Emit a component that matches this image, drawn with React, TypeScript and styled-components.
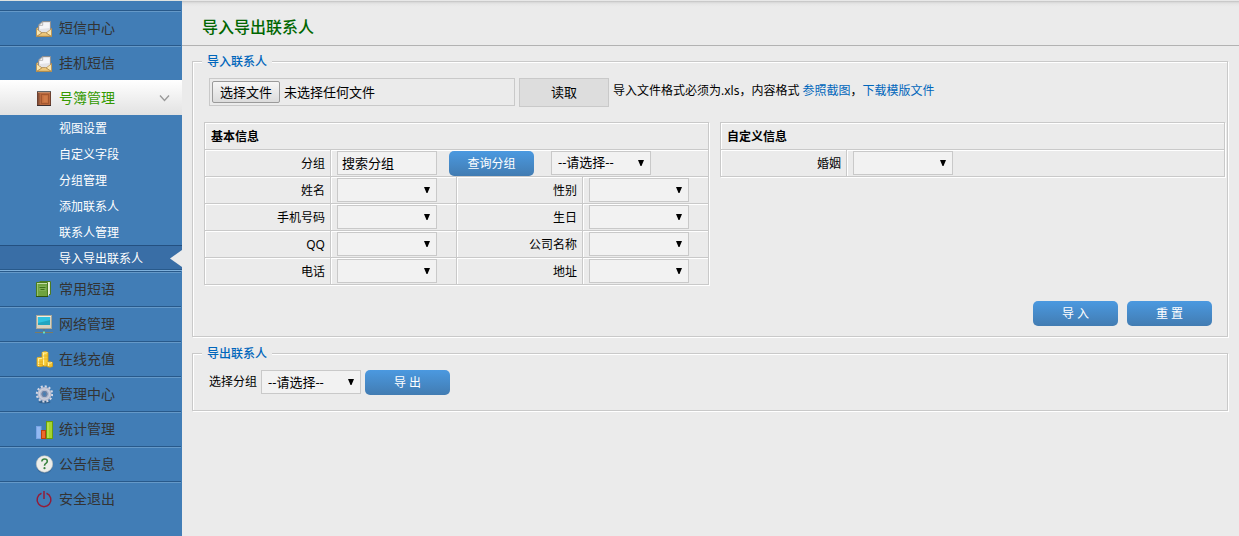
import React from "react";
import styled, { createGlobalStyle, css } from "styled-components";

const GlobalStyle = createGlobalStyle`
  *, *::before, *::after { box-sizing: border-box; }
  body {
    margin: 0;
    background: #ebebeb;
    color: #000;
    font-family: "Noto Sans", "Noto Sans CJK SC", sans-serif;
    font-size: 12px;
    line-height: 17px;
  }
  button, input, select { font: inherit; color: inherit; }
`;

const Page = styled.div`
  display: grid;
  grid-template-columns: 182px minmax(0, 1fr);
  min-height: 100vh;
`;

/* ---------- sidebar ---------- */

const Sidebar = styled.nav`
  background: #417db6;
  border-top: 1px solid #dfe3e0;
  padding-top: 9px;
`;

const List = styled.ul`
  list-style: none;
  margin: 0;
  padding: 0;
`;

const MenuLink = styled.a<{ $active?: boolean }>`
  display: flex;
  align-items: center;
  gap: 6px;
  height: 35px;
  padding: 0 12px 0 35px;
  font-size: 14px;
  line-height: 20px;
  text-decoration: none;
  ${(p) =>
    p.$active
      ? css`
          color: #339900;
          background: linear-gradient(#fff, #e2e2e2);
        `
      : css`
          color: #333;
          margin-right: 1px;
          border-top: 1px solid #28598a;
          box-shadow: inset 0 1px 0 #6599c8;
        `}
`;

const MenuText = styled.span`
  flex: 1;
`;

const SubLink = styled.a<{ $active?: boolean }>`
  display: flex;
  align-items: center;
  justify-content: space-between;
  height: 26px;
  padding-left: 59px;
  color: #fff;
  text-decoration: none;
  ${(p) =>
    p.$active &&
    css`
      background: #396ea6;
      border-top: 1px solid #245080;
      border-bottom: 1px solid #7db0dc;
      box-shadow: inset 0 -1px 0 #28598a;
    `}
`;

const IconSvg = styled.svg`
  display: block;
  flex: none;
`;

/* ---------- content ---------- */

const Main = styled.main`
  border-top: 1px solid #e8e8e8;
  background: linear-gradient(#bdbdbd, #d6d6d6 1px, #e6e6e6 3px, #ebebeb 6px);
`;

const Title = styled.h1`
  margin: 0;
  padding: 0 20px;
  height: 45px;
  line-height: 52px;
  border-bottom: 1px solid #b2b2b2;
  font-size: 16px;
  font-weight: 500;
  color: #006600;
`;

const Group = styled.fieldset<{ $bottom: number }>`
  min-width: 0;
  margin: 7px 11px 8px 10px;
  padding: 8px 2px ${(p) => p.$bottom}px 9px;
  border: 1px solid #c9c9c9;
  box-shadow: 1px 1px 0 #fff, inset 1px 1px 0 #fff;
`;

const Legend = styled.legend`
  padding: 0 5px;
  height: 17px;
  background: #ebebeb;
  color: #0066bb;
  font-weight: 500;
`;

const FormRow = styled.div`
  display: flex;
  align-items: flex-start;
  gap: 4px;
  padding-left: 7px;
`;

const RowText = styled.span`
  line-height: 24px;
`;

const Note = styled.span`
  line-height: 26px;
`;

const FileField = styled.label`
  position: relative;
  display: flex;
  align-items: center;
  gap: 4px;
  width: 306px;
  height: 28px;
  padding: 0 2px;
  border: 1px solid #c9c9c9;
  font-size: 13px;
`;

const FileInput = styled.input`
  position: absolute;
  inset: 0;
  width: 100%;
  height: 100%;
  margin: 0;
  opacity: 0;
`;

const FileTrigger = styled.span`
  width: 68px;
  height: 22px;
  line-height: 20px;
  text-align: center;
  border: 1px solid #9a9a9a;
  border-radius: 2px;
  background: linear-gradient(#f6f6f6, #dcdcdc);
`;

const PlainButton = styled.button`
  width: 90px;
  height: 29px;
  padding: 0;
  border: 1px solid #c9c9c9;
  background: #ddd;
  font-size: 13px;
`;

const BlueButton = styled.button`
  flex: none;
  width: 85px;
  height: 25px;
  padding: 0;
  border: 0;
  border-radius: 5px;
  background: linear-gradient(#4b99e0, #427cb2);
  color: #fff;
`;

const Link = styled.a`
  color: #0066bb;
  text-decoration: none;
`;

const Tables = styled.div`
  display: grid;
  grid-template-columns: repeat(2, minmax(0, 1fr));
  align-items: start;
  gap: 11px;
  margin: 15px 0 16px;
  padding-left: 2px;
`;

const Table = styled.table`
  width: 100%;
  table-layout: fixed;
  border-spacing: 0;
  border: solid #c9c9c9;
  border-width: 1px 0 0 1px;
  box-shadow: 1px 1px 0 #fff;
`;

const cell = css`
  height: 27px;
  padding: 0 6px;
  border: solid #c9c9c9;
  border-width: 0 1px 1px 0;
  box-shadow: inset 1px 1px 0 #fff;
  text-align: left;
`;

const Heading = styled.th`
  ${cell}
`;

const LabelCell = styled.th`
  ${cell}
  padding-right: 5px;
  font-weight: normal;
  text-align: right;
`;

const Cell = styled.td`
  ${cell}
`;

const SearchLine = styled.div`
  display: flex;
  align-items: flex-start;
  height: 25px;
`;

const SearchInput = styled.input`
  width: 100px;
  height: 24px;
  margin-right: 12px;
  padding: 0 4px;
  border: 1px solid #c9c9c9;
  background: #f2f2f2;
  font-size: 13px;
`;

const SearchButton = styled(BlueButton)`
  margin-right: 17px;
`;

const SelectBox = styled.span`
  position: relative;
  display: block;
  flex: none;
  width: 100px;
  height: 24px;
`;

const NativeSelect = styled.select`
  appearance: none;
  display: block;
  width: 100%;
  height: 100%;
  padding: 0 16px 0 6px;
  border: 1px solid #c9c9c9;
  border-radius: 0;
  background: #f2f2f2;
  font-size: 13px;
`;

const Arrow = styled.svg`
  position: absolute;
  right: 7px;
  top: 9px;
  pointer-events: none;
`;

const Actions = styled.div`
  display: flex;
  justify-content: flex-end;
  gap: 9px;
  padding-right: 13px;
`;

/* ---------- icons ---------- */

const Icon = ({ children }: { children: React.ReactNode }) => (
  <IconSvg width="18" height="20" viewBox="0 0 18 20" aria-hidden="true">
    {children}
  </IconSvg>
);

const MailIcon = () => (
  <Icon>
    <path d="M1.5 10.500 3.500 9h11l2 1.500v8h-15z" fill="#f3d791" stroke="#a9854a" />
    <path d="M3.500 13V7l4-3.500h8V13l-6 3z" fill="#e3e3e6" stroke="#909090" />
    <path d="M5 7.500 8 5h6.500v5L5 11z" fill="#f6f6f8" />
    <path d="M4 7.300h3.700V4z" fill="#fff" stroke="#9a9a9a" strokeWidth=".7" />
    <path d="M1.500 10.800 7 15l-5.500 3.500zM16.500 10.800 11 15l5.500 3.500z" fill="#fae6b0" stroke="#b48d4b" strokeWidth=".7" />
    <path d="M2 18.300 7.500 14.500h3l5.500 3.800z" fill="#ecc577" stroke="#a9854a" strokeWidth=".7" />
  </Icon>
);

const BookIcon = () => (
  <Icon>
    <rect x="2.500" y="3.500" width="13" height="14" fill="#b8693f" stroke="#6d4130" />
    <path d="M3 4h1.500v13H3z" fill="#86513a" />
    <path d="M2 3.500h14" stroke="#5f6469" />
    <path d="M3 4.500h12" stroke="#c08a68" />
    <rect x="6.500" y="6.500" width="7" height="9" fill="#c5703f" stroke="#a3572f" />
    <rect x="8.500" y="8" width="4" height="6" fill="#cf7b48" />
    <path d="M2 17.500h14" stroke="#3d2f2e" />
  </Icon>
);

const NotesIcon = () => (
  <Icon>
    <path d="M4.500 2.500h11v13h-2" fill="#dcebc9" stroke="#4c7a22" />
    <path d="M12.500 3.500h1.500v13h-1.500z" fill="#e8f2da" />
    <path d="M1.500 3.500h11v14h-11z" fill="#6fa33f" stroke="#4a7c1c" />
    <path d="M2 4.500h10" stroke="#c3dca6" />
    <path d="M2.500 5v12" stroke="#97c26c" />
    <path d="M4 7h7v5H4z" fill="#7fb052" />
    <path d="M4.500 8.500h6M5.500 10.500h4" stroke="#3f7018" />
    <path d="M1 17.500h12" stroke="#2f540c" />
  </Icon>
);

const NetworkIcon = () => (
  <Icon>
    <rect x="1.500" y="1.500" width="15" height="13" fill="#d8d2bf" stroke="#a9a797" />
    <path d="M2 2.500h14" stroke="#f1eee2" />
    <rect x="3" y="3" width="12" height="8" fill="#22a5c0" />
    <path d="M3 3h12v3L3 9z" fill="#2fc3e2" />
    <path d="M9 15v3" stroke="#6f7364" />
    <path d="M0 18.500h18" stroke="#7c7c63" />
    <path d="M8 17.500h2v2H8z" fill="#65e0c2" />
  </Icon>
);

const CoinsIcon = () => (
  <Icon>
    <path d="M7 3.500v13q3 1.500 6 0v-13q-3-2-6 0z" fill="#f7ca36" stroke="#dba010" strokeWidth=".8" />
    <path d="M2 9v8q3 1.500 6 0V9q-3-1.800-6 0z" fill="#f5c22d" stroke="#dba010" strokeWidth=".8" />
    <path d="M12 13.500v4q3 1.500 5.500 0v-4q-2.500-1.500-5.500 0z" fill="#f5c22d" stroke="#dba010" strokeWidth=".8" />
    <path d="M8.500 4v12M3.500 10v7M13.500 14v3" stroke="#fff3a4" strokeWidth="1.300" />
    <path d="M7.500 3.500q2.500 1.500 5 0M2.500 9q2.500 1.500 5 0M12.500 13.500q2.500 1.500 4.500 0" fill="none" stroke="#fff3a4" />
    <path d="M8 7h5M8 10h5M3 13h5M3 15.500h5" stroke="#dba010" strokeWidth=".5" />
  </Icon>
);

const GearIcon = () => (
  <Icon>
    <ellipse cx="9.500" cy="18" rx="6" ry="1.500" fill="#27476b" opacity=".6" />
    <circle cx="9.500" cy="10" r="7.500" fill="none" stroke="#d4d8e5" strokeWidth="2.400" strokeDasharray="2 1.927" />
    <circle cx="9.500" cy="10" r="5" fill="none" stroke="#b5bacd" strokeWidth="4" />
    <circle cx="9.500" cy="10" r="5.200" fill="none" stroke="#cfd2df" strokeWidth="1.200" />
    <circle cx="9.500" cy="10" r="2.400" fill="#4b7fb2" stroke="#7c84a0" />
  </Icon>
);

const ChartIcon = () => (
  <Icon>
    <rect x="1.500" y="7.500" width="4.500" height="12" fill="#93b9f2" stroke="#7ba5e6" />
    <rect x="6.500" y="11.500" width="4" height="8" fill="#ed6b29" stroke="#bd410b" />
    <rect x="11.500" y="2.500" width="6" height="17" fill="#a4d42f" stroke="#699d0c" />
    <path d="M13 4v15" stroke="#c8ec69" />
  </Icon>
);

const HelpIcon = () => (
  <Icon>
    <circle cx="9.500" cy="11.300" r="8.300" fill="#2c5580" opacity=".5" />
    <circle cx="9.500" cy="10" r="8.200" fill="#eeeeea" stroke="#c8c8bf" strokeWidth=".6" />
    <path d="M6.800 7.500q.3-2.500 2.800-2.500 2.700 0 2.700 2.200 0 1.200-1.400 2.200-1.400.9-1.400 2.300" fill="none" stroke="#3c8441" strokeWidth="1.600" />
    <circle cx="9.500" cy="14.200" r="1.100" fill="#3c8441" />
  </Icon>
);

const PowerIcon = () => (
  <Icon>
    <path d="M6.500 4.300a6.900 6.900 0 1 0 5 0M9 2v8" fill="none" stroke="#941c38" strokeWidth="1.500" />
  </Icon>
);

const Chevron = () => (
  <IconSvg width="11" height="8" viewBox="0 0 11 8" aria-hidden="true">
    <path d="M1 1.500 5.500 6.500 10 1.500" fill="none" stroke="#999" strokeWidth="1.300" />
  </IconSvg>
);

/* ---------- parts ---------- */

const topMenu = [
  { text: "短信中心", icon: <MailIcon /> },
  { text: "挂机短信", icon: <MailIcon /> },
];

const subMenu = ["视图设置", "自定义字段", "分组管理", "添加联系人", "联系人管理", "导入导出联系人"];

const bottomMenu = [
  { text: "常用短语", icon: <NotesIcon /> },
  { text: "网络管理", icon: <NetworkIcon /> },
  { text: "在线充值", icon: <CoinsIcon /> },
  { text: "管理中心", icon: <GearIcon /> },
  { text: "统计管理", icon: <ChartIcon /> },
  { text: "公告信息", icon: <HelpIcon /> },
  { text: "安全退出", icon: <PowerIcon /> },
];

const fieldRows = [
  ["姓名", "性别"],
  ["手机号码", "生日"],
  ["QQ", "公司名称"],
  ["电话", "地址"],
];

const MenuItem = ({ text, icon }: { text: string; icon: React.ReactNode }) => (
  <li>
    <MenuLink href="#">
      {icon}
      <MenuText>{text}</MenuText>
    </MenuLink>
  </li>
);

const Select = ({ id, text = "", label }: { id: string; text?: string; label?: string }) => (
  <SelectBox>
    <NativeSelect id={id} aria-label={label}>
      <option>{text}</option>
    </NativeSelect>
    <Arrow width="6" height="6" viewBox="0 0 6 6" aria-hidden="true">
      <path d="M0 0h6L3.500 6h-1z" fill="#000" />
    </Arrow>
  </SelectBox>
);

const Field = ({ name }: { name: string }) => (
  <>
    <LabelCell scope="row">
      <label htmlFor={`field-${name}`}>{name}</label>
    </LabelCell>
    <Cell>
      <Select id={`field-${name}`} />
    </Cell>
  </>
);

export default function App() {
  return (
    <>
      <GlobalStyle />
      <Page>
        <Sidebar>
          <List>
            {topMenu.map((m) => (
              <MenuItem key={m.text} {...m} />
            ))}
            <li>
              <MenuLink href="#" $active>
                <BookIcon />
                <MenuText>号簿管理</MenuText>
                <Chevron />
              </MenuLink>
              <List>
                {subMenu.map((text, i) => {
                  const active = i === subMenu.length - 1;
                  return (
                    <li key={text}>
                      <SubLink href="#" $active={active}>
                        {text}
                        {active && (
                          <IconSvg width="12" height="17" viewBox="0 0 12 17" aria-hidden="true">
                            <path d="M12 0v17L0 8.500z" fill="#ebebeb" />
                          </IconSvg>
                        )}
                      </SubLink>
                    </li>
                  );
                })}
              </List>
            </li>
            {bottomMenu.map((m) => (
              <MenuItem key={m.text} {...m} />
            ))}
          </List>
        </Sidebar>

        <Main>
          <Title>导入导出联系人</Title>

          <Group $bottom={10}>
            <Legend>导入联系人</Legend>
            <FormRow>
              <FileField>
                <FileInput type="file" accept=".xls" />
                <FileTrigger>选择文件</FileTrigger>
                <span>未选择任何文件</span>
              </FileField>
              <PlainButton type="button">读取</PlainButton>
              <Note>
                导入文件格式必须为.xls，内容格式 <Link href="#">参照截图</Link>，<Link href="#">下载模版文件</Link>
              </Note>
            </FormRow>

            <Tables>
              <Table>
                <thead>
                  <tr>
                    <Heading colSpan={4}>基本信息</Heading>
                  </tr>
                </thead>
                <tbody>
                  <tr>
                    <LabelCell scope="row">
                      <label htmlFor="group-search">分组</label>
                    </LabelCell>
                    <Cell colSpan={3}>
                      <SearchLine>
                        <SearchInput id="group-search" type="text" defaultValue="搜索分组" />
                        <SearchButton type="button">查询分组</SearchButton>
                        <Select id="group-select" text="--请选择--" label="分组" />
                      </SearchLine>
                    </Cell>
                  </tr>
                  {fieldRows.map(([a, b]) => (
                    <tr key={a}>
                      <Field name={a} />
                      <Field name={b} />
                    </tr>
                  ))}
                </tbody>
              </Table>

              <Table>
                <colgroup>
                  <col width="25%" />
                  <col />
                </colgroup>
                <thead>
                  <tr>
                    <Heading colSpan={2}>自定义信息</Heading>
                  </tr>
                </thead>
                <tbody>
                  <tr>
                    <Field name="婚姻" />
                  </tr>
                </tbody>
              </Table>
            </Tables>

            <Actions>
              <BlueButton type="button">导 入</BlueButton>
              <BlueButton type="reset">重 置</BlueButton>
            </Actions>
          </Group>

          <Group $bottom={15}>
            <Legend>导出联系人</Legend>
            <FormRow>
              <RowText as="label" htmlFor="export-group">
                选择分组
              </RowText>
              <Select id="export-group" text="--请选择--" />
              <BlueButton type="button">导 出</BlueButton>
            </FormRow>
          </Group>
        </Main>
      </Page>
    </>
  );
}
